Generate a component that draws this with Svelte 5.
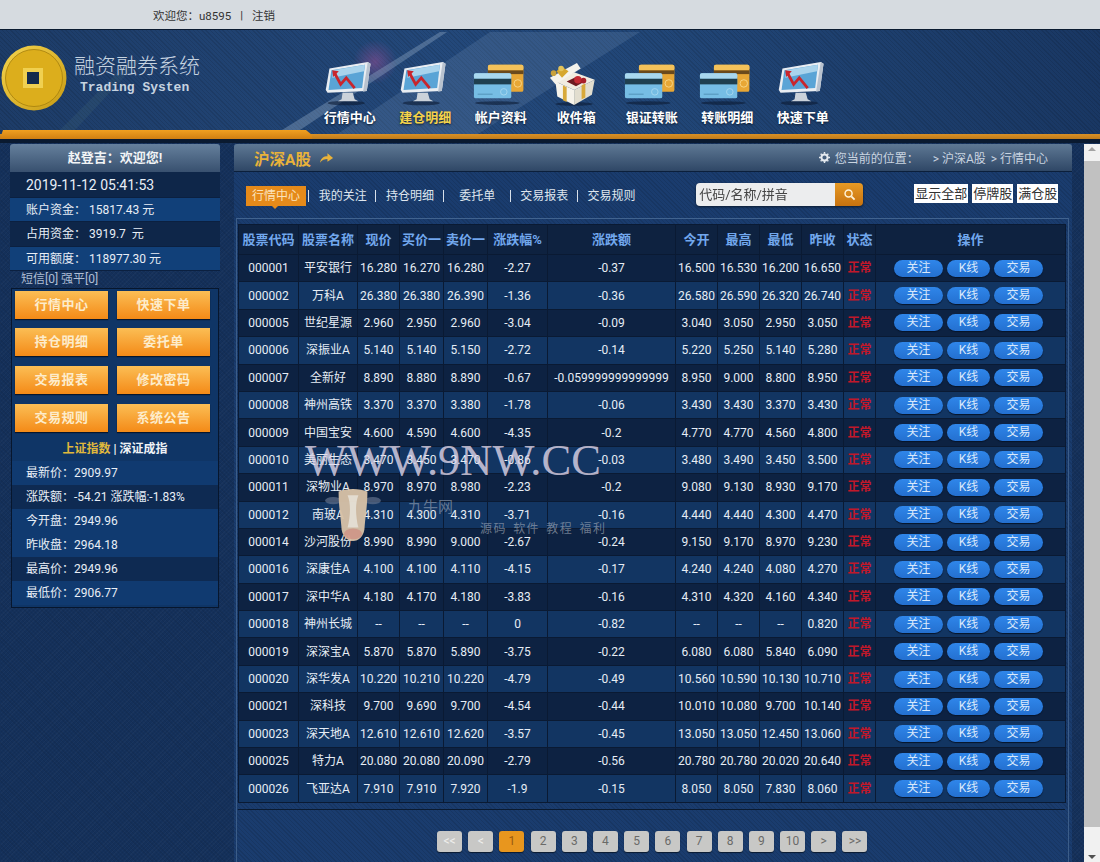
<script>
  const nav = [
    { label: '行情中心', icon: 'monitor' },
    { label: '建仓明细', icon: 'monitor', active: true },
    { label: '帐户资料', icon: 'cards' },
    { label: '收件箱', icon: 'gift' },
    { label: '银证转账', icon: 'cards' },
    { label: '转账明细', icon: 'cards' },
    { label: '快速下单', icon: 'monitor' }
  ];
  const account = [
    { text: '2019-11-12 05:41:53', cls: 'date dark' },
    { text: '账户资金： 15817.43 元', cls: 'light' },
    { text: '占用资金： 3919.7  元', cls: 'dark' },
    { text: '可用额度： 118977.30 元', cls: 'light' }
  ];
  const shortcuts = ['行情中心', '快速下单', '持仓明细', '委托单', '交易报表', '修改密码', '交易规则', '系统公告'];
  const index = [
    { text: '最新价：2909.97', cls: 'light' },
    { text: '涨跌额：-54.21 涨跌幅:-1.83%', cls: 'dark' },
    { text: '今开盘：2949.96', cls: 'light' },
    { text: '昨收盘：2964.18', cls: 'light' },
    { text: '最高价：2949.96', cls: 'dark' },
    { text: '最低价：2906.77', cls: 'light' }
  ];
  const tabs = ['行情中心', '我的关注', '持仓明细', '委托单', '交易报表', '交易规则'];
  const columns = ['股票代码', '股票名称', '现价', '买价一', '卖价一', '涨跌幅%', '涨跌额', '今开', '最高', '最低', '昨收', '状态', '操作'];
  const stocks = [
    ['000001', '平安银行', '16.280', '16.270', '16.280', '-2.27', '-0.37', '16.500', '16.530', '16.200', '16.650'],
    ['000002', '万科A', '26.380', '26.380', '26.390', '-1.36', '-0.36', '26.580', '26.590', '26.320', '26.740'],
    ['000005', '世纪星源', '2.960', '2.950', '2.960', '-3.04', '-0.09', '3.040', '3.050', '2.950', '3.050'],
    ['000006', '深振业A', '5.140', '5.140', '5.150', '-2.72', '-0.14', '5.220', '5.250', '5.140', '5.280'],
    ['000007', '全新好', '8.890', '8.880', '8.890', '-0.67', '-0.059999999999999', '8.950', '9.000', '8.800', '8.950'],
    ['000008', '神州高铁', '3.370', '3.370', '3.380', '-1.78', '-0.06', '3.430', '3.430', '3.370', '3.430'],
    ['000009', '中国宝安', '4.600', '4.590', '4.600', '-4.35', '-0.2', '4.770', '4.770', '4.560', '4.800'],
    ['000010', '美丽生态', '3.470', '3.450', '3.470', '-0.86', '-0.03', '3.480', '3.490', '3.450', '3.500'],
    ['000011', '深物业A', '8.970', '8.970', '8.980', '-2.23', '-0.2', '9.080', '9.130', '8.930', '9.170'],
    ['000012', '南玻A', '4.310', '4.300', '4.310', '-3.71', '-0.16', '4.440', '4.440', '4.300', '4.470'],
    ['000014', '沙河股份', '8.990', '8.990', '9.000', '-2.67', '-0.24', '9.150', '9.170', '8.970', '9.230'],
    ['000016', '深康佳A', '4.100', '4.100', '4.110', '-4.15', '-0.17', '4.240', '4.240', '4.080', '4.270'],
    ['000017', '深中华A', '4.180', '4.170', '4.180', '-3.83', '-0.16', '4.310', '4.320', '4.160', '4.340'],
    ['000018', '神州长城', '--', '--', '--', '0', '-0.82', '--', '--', '--', '0.820'],
    ['000019', '深深宝A', '5.870', '5.870', '5.890', '-3.75', '-0.22', '6.080', '6.080', '5.840', '6.090'],
    ['000020', '深华发A', '10.220', '10.210', '10.220', '-4.79', '-0.49', '10.560', '10.590', '10.130', '10.710'],
    ['000021', '深科技', '9.700', '9.690', '9.700', '-4.54', '-0.44', '10.010', '10.080', '9.700', '10.140'],
    ['000023', '深天地A', '12.610', '12.610', '12.620', '-3.57', '-0.45', '13.050', '13.050', '12.450', '13.060'],
    ['000025', '特力A', '20.080', '20.080', '20.090', '-2.79', '-0.56', '20.780', '20.780', '20.020', '20.640'],
    ['000026', '飞亚达A', '7.910', '7.910', '7.920', '-1.9', '-0.15', '8.050', '8.050', '7.830', '8.060']
  ];
  const pages = ['<<', '<', '1', '2', '3', '4', '5', '6', '7', '8', '9', '10', '>', '>>'];
</script>

{#snippet monitor()}
  <svg class="nav-icon" viewBox="0 0 60 50">
    <ellipse cx="26" cy="47" rx="20" ry="2.5" fill="#0b1b33" opacity="0.6" />
    <path d="M8 10 L49 3 L52 5 L48 34 L6 36 L4 33 Z" fill="#e9edf2" />
    <path d="M49 3 L52 5 L48 34 L44 35 Z" fill="#b8c2cf" />
    <path d="M10 12 L46 6 L43 31 L7 33 Z" fill="#5aa4d6" />
    <path d="M12 12 L46 6 L45 13 L11 20 Z" fill="#a9d3ec" />
    <path d="M13 14 L20 27 L26 20 L35 31" fill="none" stroke="#c9252c" stroke-width="3" />
    <path d="M11 12 L18 13 L12 19 Z" fill="#c9252c" />
    <path d="M22 36 L33 36 L35 43 L39 45 L17 45 L21 43 Z" fill="#cbd2da" />
  </svg>
{/snippet}

{#snippet cards()}
  <svg class="nav-icon" viewBox="2 0 60 50">
    <ellipse cx="28" cy="47" rx="24" ry="2" fill="#0b1b33" opacity="0.6" />
    <rect x="18" y="6" width="38" height="29" rx="2" fill="#e8a735" />
    <rect x="18" y="6" width="38" height="6" rx="2" fill="#f4c25a" />
    <rect x="18" y="12" width="38" height="4" fill="#6b4a1c" />
    <circle cx="50" cy="26" r="4" fill="none" stroke="#f7d587" stroke-width="1" />
    <rect x="3" y="15" width="40" height="27" rx="2" fill="#76bde4" />
    <rect x="3" y="15" width="40" height="6" rx="2" fill="#a9d8ef" />
    <rect x="3" y="21" width="40" height="6" fill="#1f3f4f" />
    <circle cx="35" cy="35" r="3.5" fill="none" stroke="#a5d6ee" stroke-width="1" />
    <rect x="7" y="37" width="16" height="1" fill="#4f8fb5" />
  </svg>
{/snippet}

{#snippet gift()}
  <svg class="nav-icon" viewBox="6 0 60 50">
    <ellipse cx="34" cy="48" rx="20" ry="2" fill="#0b1b33" opacity="0.6" />
    <path d="M14 24 L34 33 L34 49 L16 40 Z" fill="#f6f3ea" />
    <path d="M34 33 L56 22 L53 38 L34 49 Z" fill="#e2decf" />
    <path d="M14 24 L34 14 L56 22 L34 33 Z" fill="#f1ece0" />
    <path d="M26 24 L36 19 L47 23 L36 29 Z" fill="#6d1a20" />
    <path d="M22 28 L22 44 L26 46 L26 30 Z" fill="#d8a93a" />
    <path d="M42 28 L42 43 L46 41 L46 26 Z" fill="#d8a93a" />
    <path d="M8 20 L37 4 L41 10 L14 27 Z" fill="#f5f3ec" />
    <path d="M15 13 L21 8 L28 13 L21 20 Z" fill="#d6a72e" />
    <circle cx="12" cy="15" r="3" fill="#c8a13c" />
    <circle cx="20" cy="10" r="3" fill="#e4c35a" />
    <circle cx="38" cy="22" r="4" fill="#c32a33" />
    <circle cx="44" cy="23" r="3" fill="#a81f29" />
  </svg>
{/snippet}

<div class="page">
  <div class="topbar"><span>欢迎您：u8595</span><span class="bar">|</span><span>注销</span></div>

  <header class="header">
    <svg class="streaks" viewBox="0 0 1100 109" preserveAspectRatio="none">
      <defs>
        <radialGradient id="glow">
          <stop offset="0" stop-color="#a0509a" stop-opacity="0.5" />
          <stop offset="1" stop-color="#a0509a" stop-opacity="0" />
        </radialGradient>
      </defs>
      <circle cx="375" cy="32" r="22" fill="url(#glow)" />
      <path d="M282 100 L440 2 L447 2 L300 100 Z" fill="#9fb4cf" opacity="0.35" />
      <path d="M330 109 L490 2 L640 2 L470 109 Z" fill="#7f9cc0" opacity="0.2" />
      <path d="M60 100 L130 30 L140 30 L75 100 Z" fill="#5f8f80" opacity="0.12" />
    </svg>
    <div class="head-row">
      <div class="logo">
        <svg class="coin" viewBox="0 0 66 66">
          <defs>
            <linearGradient id="gold" x1="0" y1="0" x2="1" y2="1">
              <stop offset="0" stop-color="#f5d44e" />
              <stop offset="1" stop-color="#c79a12" />
            </linearGradient>
          </defs>
          <circle cx="33" cy="33" r="32.5" fill="url(#gold)" />
          <circle cx="33" cy="33" r="28.5" fill="#dcae1c" stroke="#a57f0d" stroke-width="0.8" />
          <rect x="22" y="23" width="20" height="20" fill="#f0d050" />
          <rect x="26" y="27" width="12" height="12" fill="#152b4c" />
        </svg>
        <div class="brand">
          <div class="brand-cn">融资融券系统</div>
          <div class="brand-en">Trading Systen</div>
        </div>
      </div>
      <nav class="nav">
        {#each nav as item}
          <div class="nav-item" class:active={item.active}>
            {#if item.icon === 'monitor'}
              {@render monitor()}
            {:else if item.icon === 'cards'}
              {@render cards()}
            {:else}
              {@render gift()}
            {/if}
            <span>{item.label}</span>
          </div>
        {/each}
      </nav>
    </div>
    <div class="band"><div class="band-tab"></div></div>
  </header>

  <div class="body">
    <aside class="side">
      <div class="side-title">赵登吉：欢迎您!</div>
      {#each account as row}
        <div class="acc-row {row.cls}">{row.text}</div>
      {/each}
      <div class="sms">短信[0] 强平[0]</div>
      <div class="side-box">
        <div class="shortcuts">
          {#each shortcuts as s}
            <div class="shortcut">{s}</div>
          {/each}
        </div>
        <div class="index-tabs"><span class="on">上证指数</span> | 深证成指</div>
        {#each index as row}
          <div class="idx-row {row.cls}">{row.text}</div>
        {/each}
      </div>
    </aside>

    <main class="main">
      <div class="main-head">
        <div class="main-title">
          沪深A股
          <svg class="arrow" viewBox="0 0 16 12"><path d="M1 11 C2 6 5 4 9 4 L9 1 L15 6 L9 10 L9 7 C6 7 3 8 1 11 Z" fill="#e9b23a" /></svg>
        </div>
        <div class="crumbs">
          <svg class="gear" viewBox="0 0 12 12">
            <circle cx="6" cy="6" r="3.4" fill="none" stroke="#e6ebf0" stroke-width="2.2" />
            <path d="M6 0 V2 M6 10 V12 M0 6 H2 M10 6 H12 M1.8 1.8 L3 3 M9 9 L10.2 10.2 M1.8 10.2 L3 9 M9 3 L10.2 1.8" stroke="#e6ebf0" stroke-width="1.6" />
          </svg>
          <span class="where">您当前的位置：</span>
          <span>&gt; 沪深A股</span>
          <span>&gt; 行情中心</span>
        </div>
      </div>

      <div class="toolbar">
        <div class="tabs">
          {#each tabs as tab, i}
            <div class="tab" class:sep={i < tabs.length - 1}>
              <span class:current={i === 0}>{tab}</span>
            </div>
          {/each}
        </div>
        <div class="search">
          <div class="search-input">代码/名称/拼音</div>
          <div class="search-btn">
            <svg viewBox="0 0 14 14" width="13" height="13">
              <circle cx="6" cy="6" r="3.8" fill="none" stroke="#fff3d8" stroke-width="1.6" />
              <path d="M9 9 L12.5 12.5" stroke="#fff3d8" stroke-width="2" />
            </svg>
          </div>
        </div>
        <div class="filters">
          <div class="filter">显示全部</div>
          <div class="filter">停牌股</div>
          <div class="filter">满仓股</div>
        </div>
      </div>

      <div class="list">
        <table>
          <colgroup>
            <col class="c60" /><col class="c59" /><col class="c42" /><col class="c44" /><col class="c44" /><col class="c60" />
            <col class="c128" /><col class="c42" /><col class="c42" /><col class="c42" /><col class="c42" /><col class="c32" /><col class="c190" />
          </colgroup>
          <thead>
            <tr>
              {#each columns as c}
                <th>{c}</th>
              {/each}
            </tr>
          </thead>
          <tbody>
            {#each stocks as row}
              <tr>
                {#each row as cell}
                  <td>{cell}</td>
                {/each}
                <td class="status">正常</td>
                <td>
                  <div class="actions">
                    <span class="act wide">关注</span>
                    <span class="act">K线</span>
                    <span class="act wide">交易</span>
                  </div>
                </td>
              </tr>
            {/each}
          </tbody>
        </table>
        <div class="pager">
          {#each pages as p}
            <span class="page-btn" class:on={p === '1'} class:muted={p === '<<' || p === '<'}>{p}</span>
          {/each}
        </div>
      </div>
    </main>

    <div class="scrollbar">
      <div class="sb-up"></div>
      <div class="sb-thumb"></div>
      <div class="sb-down"></div>
    </div>
  </div>

  <!-- watermark sits over the table -->
  <div class="mark">
    <div class="mark-url">WWW.9NW.CC</div>
    <svg class="cow" viewBox="0 0 60 60">
      <ellipse cx="8" cy="14" rx="9" ry="4" fill="#5a6a86" opacity="0.8" />
      <ellipse cx="52" cy="14" rx="9" ry="4" fill="#5a6a86" opacity="0.8" />
      <path d="M14 4 C22 0 38 0 46 4 C46 20 44 30 43 42 C43 54 36 59 30 59 C24 59 17 54 17 42 C16 30 14 20 14 4 Z" fill="#d9c3a8" />
      <path d="M24 8 C28 18 27 32 24 44 L36 44 C33 32 32 18 36 8 Z" fill="#efe6d8" />
      <ellipse cx="30" cy="51" rx="10" ry="6" fill="#d9a08e" />
    </svg>
    <div class="mark-cn">九牛网</div>
    <div class="mark-sub">源码 软件 教程 福利</div>
  </div>
</div>

<style>
  :global(body) {
    margin: 0;
    background: #14305a;
  }
  .page {
    position: relative;
    width: 1100px;
    height: 862px;
    overflow: hidden;
    font-family: Roboto, "Noto Sans CJK SC", sans-serif;
    font-size: 12px;
    color: #e8eef6;
    background-color: #14305a;
    background-image:
      repeating-linear-gradient(45deg, rgba(0, 0, 0, 0.07) 0 1px, transparent 1px 3px),
      repeating-linear-gradient(-45deg, rgba(255, 255, 255, 0.025) 0 1px, transparent 1px 3px);
  }

  .topbar {
    height: 29px;
    box-sizing: border-box;
    padding-left: 153px;
    display: flex;
    align-items: center;
    gap: 9px;
    background: #d6dbe0;
    color: #333;
    font-size: 11.5px;
  }
  .bar { color: #333; }

  .header {
    position: relative;
    height: 110px;
    border-top: 1px solid #0a1a30;
    box-sizing: border-box;
    background-color: #1f4273;
    background-image:
      repeating-linear-gradient(45deg, rgba(0, 0, 0, 0.1) 0 1px, transparent 1px 3px),
      linear-gradient(90deg, #1d3c68, #23487a 40%, #214677 60%, #193763);
  }
  .streaks {
    position: absolute;
    inset: 0;
    width: 100%;
    height: 100%;
  }
  .head-row {
    position: relative;
    height: 100px;
    display: flex;
  }
  .logo {
    width: 312px;
    display: flex;
    align-items: flex-start;
  }
  .coin {
    width: 66px;
    height: 66px;
    margin: 15px 0 0 1px;
    flex: none;
  }
  .brand {
    margin: 22px 0 0 7px;
    color: #c6d3e0;
  }
  .brand-cn {
    font-size: 21px;
    line-height: 28px;
    font-weight: 300;
  }
  .brand-en {
    font-family: "Liberation Mono", monospace;
    font-size: 13px;
    font-weight: 700;
    line-height: 16px;
    margin-left: 6px;
  }
  .nav {
    display: flex;
  }
  .nav-item {
    width: 75.5px;
    display: flex;
    flex-direction: column;
    align-items: center;
    padding-top: 29px;
    box-sizing: border-box;
    font-size: 13px;
    font-weight: 700;
    color: #fff;
    text-shadow: 0 1px 2px #0a1a30;
  }
  .nav-item.active { color: #f3d24b; }
  .nav-item span { margin-top: 3px; line-height: 18px; }
  .nav-icon {
    width: 56px;
    height: 47px;
    display: block;
  }
  .band {
    position: relative;
    height: 9px;
    background: linear-gradient(#0000 4px, #d99024 4px, #c07c1c 9px);
  }
  .band-tab {
    width: 312px;
    height: 9px;
    background: linear-gradient(#f0a020, #d07f12);
    clip-path: polygon(3px 0, 306px 0, 312px 5px, 312px 9px, 0 9px);
  }

  .body {
    display: flex;
    height: 723px;
    border-top: 4px solid #0a1a30;
    box-sizing: border-box;
    padding-top: 1px;
  }
  .side {
    width: 210px;
    margin-left: 10px;
    flex: none;
  }
  .side-title {
    height: 28px;
    line-height: 28px;
    text-align: center;
    border-radius: 3px 3px 0 0;
    background: linear-gradient(#65809c, #38506f);
    font-size: 13px;
    font-weight: 700;
    color: #f2f4f6;
  }
  .acc-row {
    box-sizing: border-box;
    height: 24.3px;
    line-height: 24px;
    padding-left: 16px;
    white-space: pre;
    border-bottom: 1px solid #0b2040;
  }
  .acc-row.date {
    height: 26px;
    line-height: 26px;
    font-size: 14px;
  }
  .dark { background: #0e2649; }
  .light { background: #114079; }
  .sms {
    height: 16px;
    line-height: 17px;
    padding-left: 11px;
    color: #aebed4;
  }
  .side-box {
    margin: 1px 1px 0;
    height: 320px;
    box-sizing: border-box;
    border: 1px solid #07162d;
    background: #0f3566;
  }
  .shortcuts {
    display: grid;
    grid-template-columns: 93px 93px;
    gap: 9.6px 9px;
    padding: 2px 0 0 3px;
  }
  .shortcut {
    height: 28px;
    line-height: 28px;
    text-align: center;
    background: linear-gradient(#fbbe55, #f48a17);
    box-shadow: 0 1px 1px #07162d;
    color: #fdeccb;
    font-size: 13px;
    font-weight: 700;
    letter-spacing: 0.5px;
  }
  .index-tabs {
    height: 29px;
    line-height: 34px;
    text-align: center;
    font-weight: 700;
    color: #eef2f6;
  }
  .index-tabs .on { color: #e0b93c; }
  .idx-row {
    height: 24px;
    line-height: 25px;
    padding-left: 14px;
  }
  .idx-row.dark { background: #0e2a52; }
  .idx-row.light { background: #103a70; }

  .main {
    width: 838px;
    margin-left: 14px;
    flex: none;
    display: flex;
    flex-direction: column;
    background-color: #1a3c6e;
    background-image: repeating-linear-gradient(45deg, rgba(0, 0, 0, 0.1) 0 1px, transparent 1px 3px);
  }
  .main-head {
    height: 28px;
    flex: none;
    display: flex;
    justify-content: space-between;
    align-items: center;
    border-radius: 3px 3px 0 0;
    background: linear-gradient(#5e7894, #2f4766);
    border-bottom: 1px solid #0b1f3b;
    box-sizing: border-box;
  }
  .main-title {
    margin-left: 20px;
    display: flex;
    align-items: center;
    gap: 8px;
    font-size: 15.5px;
    font-weight: 700;
    color: #e9b23a;
  }
  .arrow { width: 15px; height: 12px; }
  .crumbs {
    margin-right: 24px;
    display: flex;
    align-items: center;
    gap: 5px;
    color: #c9d4e0;
  }
  .gear { width: 11px; height: 11px; }
  .where { margin-right: 9px; }

  .toolbar {
    height: 46px;
    flex: none;
    display: flex;
    align-items: center;
  }
  .tabs {
    display: flex;
    margin-left: 8px;
    margin-top: 2px;
  }
  .tab {
    position: relative;
    width: 67.2px;
    text-align: center;
    color: #dfe6ee;
  }
  .tab.sep::after {
    content: '';
    position: absolute;
    right: 0;
    top: 4px;
    height: 12px;
    width: 1px;
    background: #d8e0ea;
  }
  .tab span {
    display: inline-block;
    line-height: 20px;
  }
  .tab .current {
    position: relative;
    width: 60px;
    margin-left: 1px;
    background: #e58a1a;
    color: #fbe3bc;
  }
  .tab .current::after {
    content: '';
    position: absolute;
    left: 26px;
    bottom: -3px;
    border: 3px solid transparent;
    border-top-color: #e58a1a;
    border-bottom: 0;
  }
  .search {
    display: flex;
    margin-left: 51px;
    margin-top: -2px;
    height: 23px;
    filter: drop-shadow(0 1px 1px #0a1a30);
  }
  .search-input {
    width: 139px;
    box-sizing: border-box;
    padding-left: 3px;
    line-height: 23px;
    font-size: 13px;
    color: #444;
    background: #ecedee;
    border-radius: 4px 0 0 4px;
  }
  .search-btn {
    width: 28px;
    display: flex;
    align-items: center;
    justify-content: center;
    background: linear-gradient(#e79a25, #c7720f);
    border-radius: 0 4px 4px 0;
  }
  .filters {
    display: flex;
    gap: 4px;
    margin-left: 51px;
    margin-top: -4px;
  }
  .filter {
    height: 19px;
    line-height: 19px;
    padding: 0 1px;
    background: #fff;
    color: #333;
    font-size: 13px;
  }

  .list {
    flex: 1;
    margin-right: 3px;
    margin-left: 2px;
    padding: 5px 3px 0 1px;
    border-top: 1px solid #41638f;
    border-left: 1px solid #3c5d88;
    border-right: 1px solid #3c5d88;
    display: flex;
    flex-direction: column;
  }
  table {
    width: 827px;
    flex: none;
    table-layout: fixed;
    border-collapse: collapse;
  }
  .c60 { width: 60px; }
  .c59 { width: 59px; }
  .c42 { width: 42px; }
  .c44 { width: 44px; }
  .c128 { width: 128px; }
  .c32 { width: 32px; }
  .c190 { width: 190px; }
  th, td {
    padding: 0;
    text-align: center;
    border: 1px solid #0a1a33;
    white-space: nowrap;
    overflow: hidden;
  }
  th {
    height: 29px;
    background: #0e2240;
    color: #72a8ee;
    font-size: 13px;
    font-weight: 700;
    line-height: 16px;
  }
  td {
    height: 26.4px;
    line-height: 16px;
    color: #e6edf5;
  }
  tbody tr:nth-child(odd) td { background: #0d2242; }
  tbody tr:nth-child(even) td { background: #123562; }
  td.status {
    color: #c0182a;
    font-weight: 700;
  }
  .actions {
    display: flex;
    justify-content: center;
    gap: 4px;
    padding-right: 4px;
  }
  .act {
    width: 43px;
    height: 17px;
    line-height: 17px;
    border-radius: 9px;
    background: linear-gradient(#2f86ea, #2470d0);
    box-shadow: 0 1px 1px #06142a;
    color: #d9e8fb;
  }
  .act.wide { width: 49px; }

  .pager {
    display: flex;
    gap: 6.2px;
    margin-top: 6px;
    padding: 21px 0 0 199px;
    border-top: 1px solid #0a1a30;
  }
  .page-btn {
    width: 25px;
    height: 21px;
    line-height: 21px;
    text-align: center;
    border-radius: 3px;
    background: #c8c8c6;
    color: #6a6a68;
    box-shadow: 0 1px 1px #0a1a30;
  }
  .page-btn.on {
    background: #e8961e;
    color: #9a5a10;
  }
  .page-btn.muted { color: #f0f0ee; }

  .scrollbar {
    width: 16px;
    margin-left: 12px;
    flex: none;
    display: flex;
    flex-direction: column;
    background: #f1f1f1;
  }
  .sb-up, .sb-down {
    height: 17px;
    flex: none;
    position: relative;
  }
  .sb-up::after, .sb-down::after {
    content: '';
    position: absolute;
    left: 4px;
    border: 4px solid transparent;
  }
  .sb-up::after { top: 3px; border-top: 0; border-bottom-color: #a3a3a3; }
  .sb-down::after { bottom: 3px; border-bottom: 0; border-top-color: #505050; }
  .sb-thumb {
    flex: 1;
    margin-bottom: 18px;
    background: #c1c1c1;
  }

  .mark {
    position: absolute;
    left: 0;
    top: 0;
    pointer-events: none;
  }
  .mark-url {
    position: absolute;
    left: 305px;
    top: 435px;
    font-family: "Liberation Serif", serif;
    font-size: 44.5px;
    line-height: 50px;
    white-space: nowrap;
    color: rgba(226, 216, 234, 0.8);
  }
  .cow {
    position: absolute;
    left: 324px;
    top: 488px;
    width: 58px;
    height: 54px;
    opacity: 0.95;
  }
  .mark-cn {
    position: absolute;
    left: 408px;
    top: 497px;
    font-size: 15px;
    line-height: 20px;
    white-space: nowrap;
    color: rgba(170, 180, 195, 0.55);
  }
  .mark-sub {
    position: absolute;
    left: 480px;
    top: 521px;
    line-height: 16px;
    letter-spacing: 1.4px;
    word-spacing: 2px;
    white-space: nowrap;
    color: rgba(170, 178, 190, 0.6);
  }
</style>
